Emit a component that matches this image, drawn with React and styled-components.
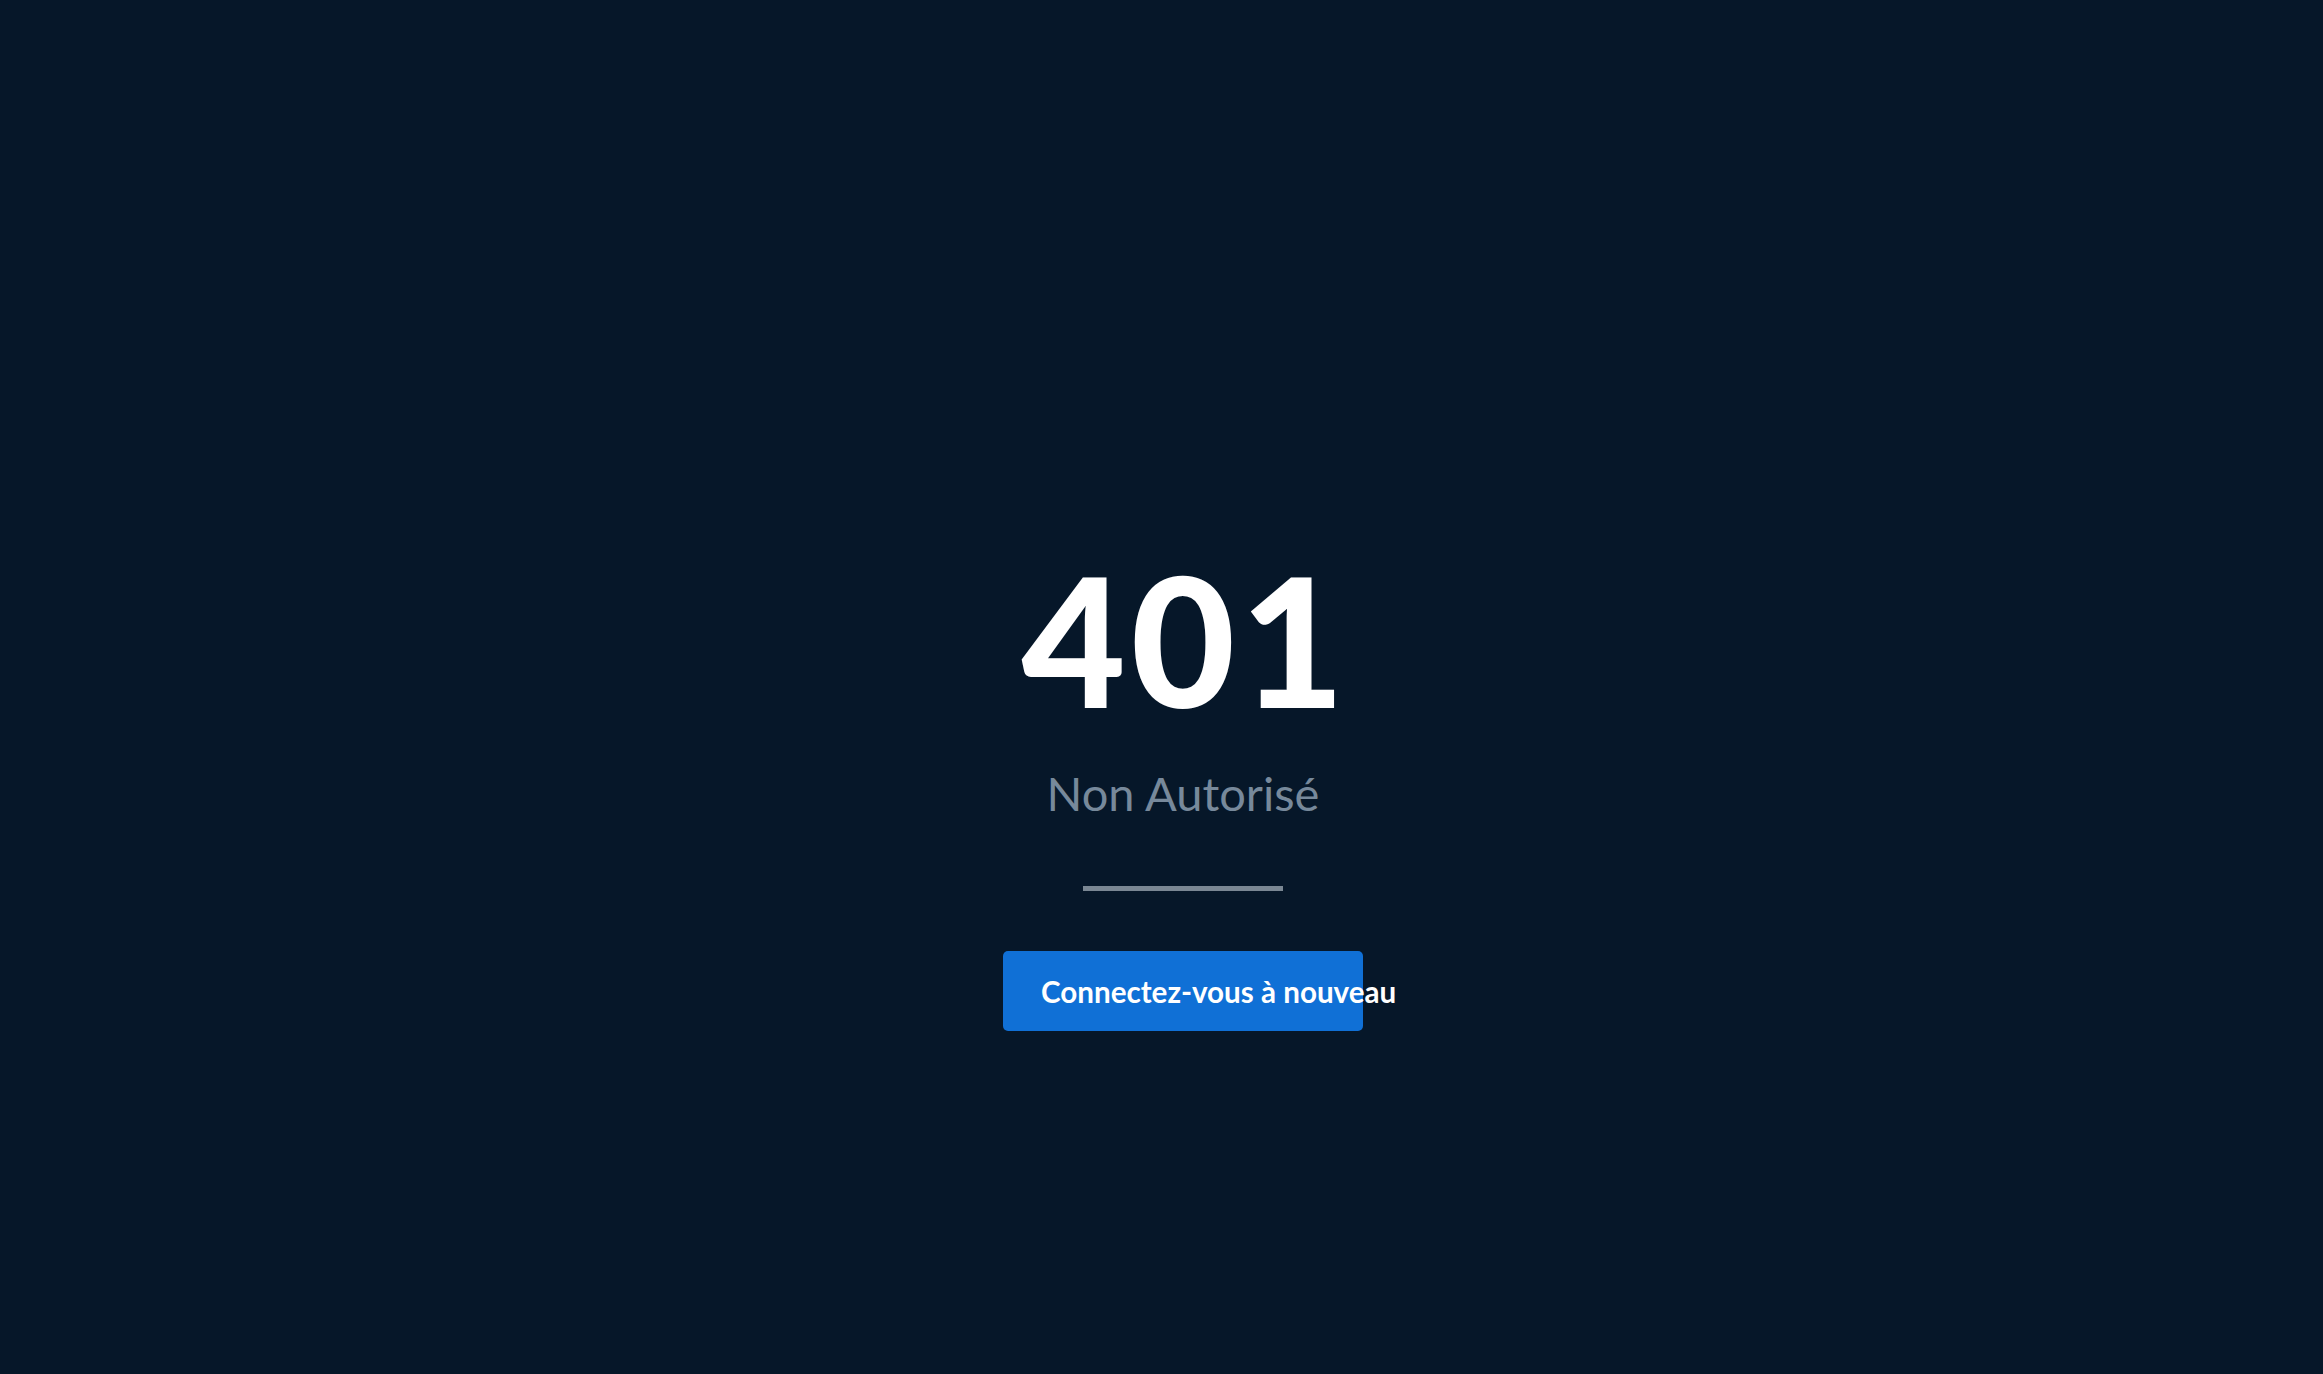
import React from 'react';
import styled, { createGlobalStyle } from 'styled-components';

const GlobalStyle = createGlobalStyle`
  html, body {
    margin: 0;
    padding: 0;
    background: #061729;
  }
  body {
    font-family: "Lato", "Noto Sans", sans-serif;
  }
`;

const Page = styled.div`
  min-height: 100vh;
  box-sizing: border-box;
  padding: 548px 0 0 43px;
  display: flex;
  flex-direction: column;
  align-items: center;
  justify-content: flex-start;
  background: #061729;
`;

const Code = styled.h1`
  margin: 0 -5px 0 0;
  font-size: 180px;
  line-height: 1;
  font-weight: 900;
  color: #ffffff;
  letter-spacing: 5px;
`;

const Message = styled.p`
  margin: 37px 0 0;
  font-size: 47px;
  line-height: 1.2;
  font-weight: 400;
  color: #77899b;
`;

const Divider = styled.hr`
  width: 200px;
  height: 5px;
  margin: 65px 0 0;
  border: 0;
  background: #7a8793;
`;

const Button = styled.button`
  margin-top: 60px;
  width: 360px;
  height: 80px;
  padding: 0 0 0 38px;
  display: flex;
  align-items: center;
  justify-content: flex-start;
  overflow: visible;
  white-space: nowrap;
  border: 0;
  border-radius: 5px;
  background: #1070d6;
  color: #ffffff;
  font-family: "Lato", "Noto Sans", sans-serif;
  font-size: 29.6px;
  font-weight: 700;
  cursor: pointer;
`;

export default function App() {
  return (
    <>
      <GlobalStyle />
      <Page>
        <Code>401</Code>
        <Message>Non Autorisé</Message>
        <Divider />
        <Button>Connectez-vous à nouveau</Button>
      </Page>
    </>
  );
}
